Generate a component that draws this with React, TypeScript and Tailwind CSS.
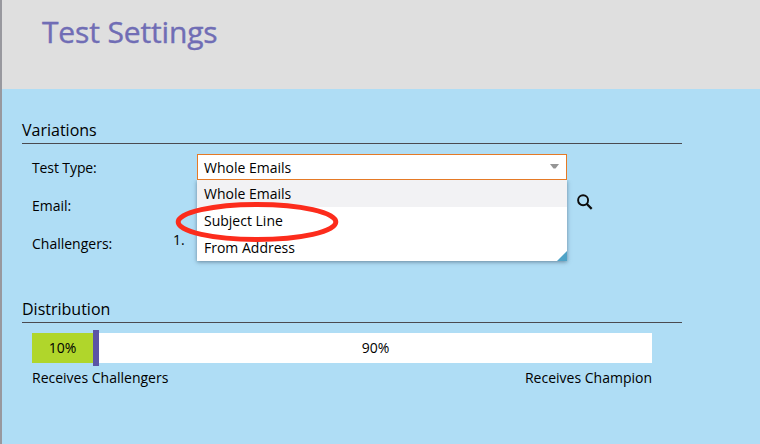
import React, { useState } from "react";

interface TestTypeSelectProps {
  value: string;
  onChange: (value: string) => void;
}

const TEST_TYPES = ["Whole Emails", "Subject Line", "From Address"];

function SearchIcon() {
  return (
    <svg width="18" height="18" viewBox="0 0 18 18" fill="none" stroke="#0c0c0c">
      <circle cx="7.1" cy="7.2" r="5" strokeWidth="1.9" />
      <path d="M10.6 10.8L15.7 15.9" strokeWidth="2.2" />
    </svg>
  );
}

function TestTypeSelect({ value, onChange }: TestTypeSelectProps) {
  return (
    <div className="relative w-[370px]">
      <div className="flex h-[26px] items-center justify-between border border-[#e57a26] bg-white pl-1.5 pr-[7px] pt-0.5">
        <span>{value}</span>
        <svg width="9" height="5" viewBox="0 0 9 5" className="-translate-y-0.5">
          <path d="M0 0H9L5.5 4.5H3.5Z" fill="#959595" />
        </svg>
      </div>
      <ul className="absolute left-0 top-[26px] w-full bg-white shadow-[0_1px_4px_rgba(40,60,80,0.55)] [clip-path:inset(0_-8px_-8px_-8px)]">
        {TEST_TYPES.map((type) => (
          <li
            key={type}
            onClick={() => onChange(type)}
            className={`flex h-[27px] cursor-pointer items-center pl-[7px] ${
              type === value ? "bg-[#f2f2f4]" : "bg-white"
            }`}
          >
            {type}
          </li>
        ))}
        <svg width="10" height="10" className="absolute bottom-0 right-0">
          <path d="M10 0V10H0Z" fill="#4fa3c7" />
        </svg>
      </ul>
      <svg
        width="164"
        height="42"
        className="pointer-events-none absolute left-[-22px] top-[47px]"
      >
        <ellipse
          cx="82"
          cy="21"
          rx="78.8"
          ry="17.5"
          fill="none"
          stroke="#fc2c1c"
          strokeWidth="5"
        />
      </svg>
    </div>
  );
}

function SectionTitle({ children }: { children: React.ReactNode }) {
  return (
    <h2 className="h-[26px] w-[660px] border-b border-[#4a4a50] text-base leading-[25px]">
      {children}
    </h2>
  );
}

function App() {
  const [testType, setTestType] = useState("Whole Emails");
  const challengerShare = 10;

  return (
    <div className="h-[444px] w-[760px] overflow-hidden border-l-2 border-[#98989e] bg-[#afddf5] font-['Open_Sans',sans-serif] text-sm leading-5 text-black">
      <header className="h-[89px] bg-[#dfdfdf] pl-10 pt-3">
        <h1 className="text-[30px] leading-10 tracking-[-0.15px] text-[#706db5] [-webkit-text-stroke:0.4px_#706db5]">
          Test Settings
        </h1>
      </header>

      <main className="pl-5 pt-[29px]">
        <section>
          <SectionTitle>Variations</SectionTitle>
          <div className="pl-2.5 pt-[10px]">
            <div className="flex h-[26px] items-center">
              <span className="w-[165px] pt-0.5 tracking-[-0.1px]">Test Type:</span>
              <TestTypeSelect value={testType} onChange={setTestType} />
            </div>
            <div className="mt-[13px] flex h-[26px] items-center">
              <span className="w-[544px]">Email:</span>
              <button className="-translate-y-1">
                <SearchIcon />
              </button>
            </div>
            <div className="mt-3 flex h-[26px] items-center">
              <span className="w-[141px]">Challengers:</span>
              <span className="-translate-y-1">1.</span>
            </div>
          </div>
        </section>

        <section className="mt-10">
          <SectionTitle>Distribution</SectionTitle>
          <div className="ml-2.5 mt-[7px] w-[620px]">
            <div className="flex h-9 items-center">
              <div className="flex h-[30px] w-[61px] items-center justify-center bg-[#b0d62b]">
                {challengerShare}%
              </div>
              <div className="h-9 w-1.5 bg-[#5b54a6]" />
              <div className="flex h-[30px] flex-1 items-center justify-center bg-white">
                {100 - challengerShare}%
              </div>
            </div>
            <div className="mt-0.5 flex justify-between">
              <span>Receives Challengers</span>
              <span>Receives Champion</span>
            </div>
          </div>
        </section>
      </main>
    </div>
  );
}

export default App;
